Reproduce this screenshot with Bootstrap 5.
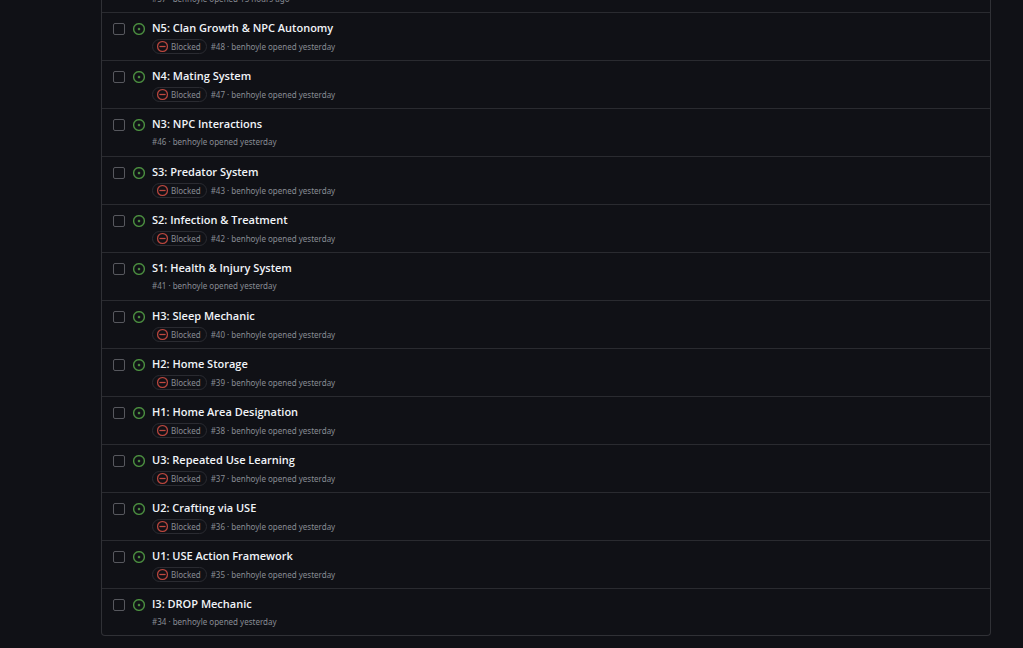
<!DOCTYPE html>
<html lang="en" data-bs-theme="dark">
<head>
<meta charset="utf-8">
<meta name="viewport" content="width=device-width, initial-scale=1">
<title>Issues</title>
<link href="https://cdn.jsdelivr.net/npm/bootstrap@5.3.0/dist/css/bootstrap.min.css" rel="stylesheet">
<style>
  body { background: #101116; font-family: "Open Sans", "Noto Sans", sans-serif; color: #e9edf2; }
  .issue-page { padding: 0 32px 12px 101px; }
  .issue-list { border: 1px solid #303136; border-top: 0; border-radius: 0 0 4px 4px; }
  .issue-list .issue-row { height: 48px; padding: 8px 10px 0 11px; border: 0; border-top: 1px solid #2a2b30; background: transparent; color: inherit; }
  .issue-list .issue-row:last-child { height: 47px; }
  .issue-list .cut-off { height: 12px; padding: 0 0 0 50px; border-top: 0; overflow: hidden; }
  .issue-row .form-check-input { width: 12px; height: 12px; margin: 2px 0 0; border: 1px solid #57585e; border-radius: 2px; background-color: transparent; }
  .state-icon { width: 12px; height: 12px; margin: 2px 7px 0 8px; fill: #519a45; stroke: #519a45; stroke-width: .4; flex: none; }
  .issue-title { font-size: 11px; line-height: 14px; font-weight: 600; color: #f0f4f8; text-decoration: none; }
  .issue-title:hover { color: #4493f8; }
  .meta-line { font-family: "Noto Sans", "Open Sans", sans-serif; font-size: 8px; line-height: 14px; color: #888c94; margin-top: 4px; }
  .cut-off .meta-line { margin-top: -8px; }
  .meta-line a { color: inherit; text-decoration: none; }
  .blocked-tag { height: 15px; padding: 0 5px 0 4px; gap: 3px; border: 1px solid #2a2b31; border-radius: 8px; margin-right: 4px; }
  .blocked-tag svg { width: 11px; height: 11px; fill: #c04a41; stroke: #c04a41; stroke-width: .4; overflow: visible; }
</style>
</head>
<body>
<svg class="d-none" aria-hidden="true">
  <symbol id="open" viewBox="0 0 16 16"><path d="M8 9.5a1.5 1.5 0 1 0 0-3 1.5 1.5 0 0 0 0 3Z"/><path d="M8 0a8 8 0 1 1 0 16A8 8 0 0 1 8 0ZM1.5 8a6.5 6.5 0 1 0 13 0 6.5 6.5 0 0 0-13 0Z"/></symbol>
  <symbol id="blocked" viewBox="0 0 16 16"><path d="M4.25 7.25h7.5a.75.75 0 0 1 0 1.5h-7.5a.75.75 0 0 1 0-1.5Z"/><path d="M16 8A8 8 0 1 1 0 8a8 8 0 0 1 16 0Zm-1.5 0a6.5 6.5 0 1 0-13 0 6.5 6.5 0 0 0 13 0Z"/></symbol>
</svg>
<main class="issue-page">
  <ul class="list-group issue-list" id="issues">
    <li class="list-group-item issue-row cut-off d-flex align-items-start"><div class="meta-line">#57 · <a href="#benhoyle">benhoyle</a> opened 15 hours ago</div></li>
  </ul>
</main>
<script src="https://cdn.jsdelivr.net/npm/bootstrap@5.3.0/dist/js/bootstrap.bundle.min.js"></script>
<script>
  const issues = [
    [48, "N5: Clan Growth & NPC Autonomy", true],
    [47, "N4: Mating System", true],
    [46, "N3: NPC Interactions", false],
    [43, "S3: Predator System", true],
    [42, "S2: Infection & Treatment", true],
    [41, "S1: Health & Injury System", false],
    [40, "H3: Sleep Mechanic", true],
    [39, "H2: Home Storage", true],
    [38, "H1: Home Area Designation", true],
    [37, "U3: Repeated Use Learning", true],
    [36, "U2: Crafting via USE", true],
    [35, "U1: USE Action Framework", true],
    [34, "I3: DROP Mechanic", false]
  ];
  const tag = '<span class="blocked-tag d-inline-flex align-items-center"><svg aria-hidden="true"><use href="#blocked"/></svg>Blocked</span>';
  document.getElementById("issues").insertAdjacentHTML("beforeend", issues.map(([n, title, blocked]) => `
    <li class="list-group-item issue-row d-flex align-items-start">
      <input class="form-check-input flex-shrink-0" type="checkbox" id="pick-${n}" aria-labelledby="title-${n}">
      <svg class="state-icon" role="img" aria-label="Open"><use href="#open"/></svg>
      <div>
        <a class="issue-title d-block" id="title-${n}" href="#${n}">${title.replace("&", "&amp;")}</a>
        <div class="meta-line d-flex align-items-center">${blocked ? tag : ""}<span>#${n} · <a href="#benhoyle">benhoyle</a> opened yesterday</span></div>
      </div>
    </li>`).join(""));
</script>
</body>
</html>
